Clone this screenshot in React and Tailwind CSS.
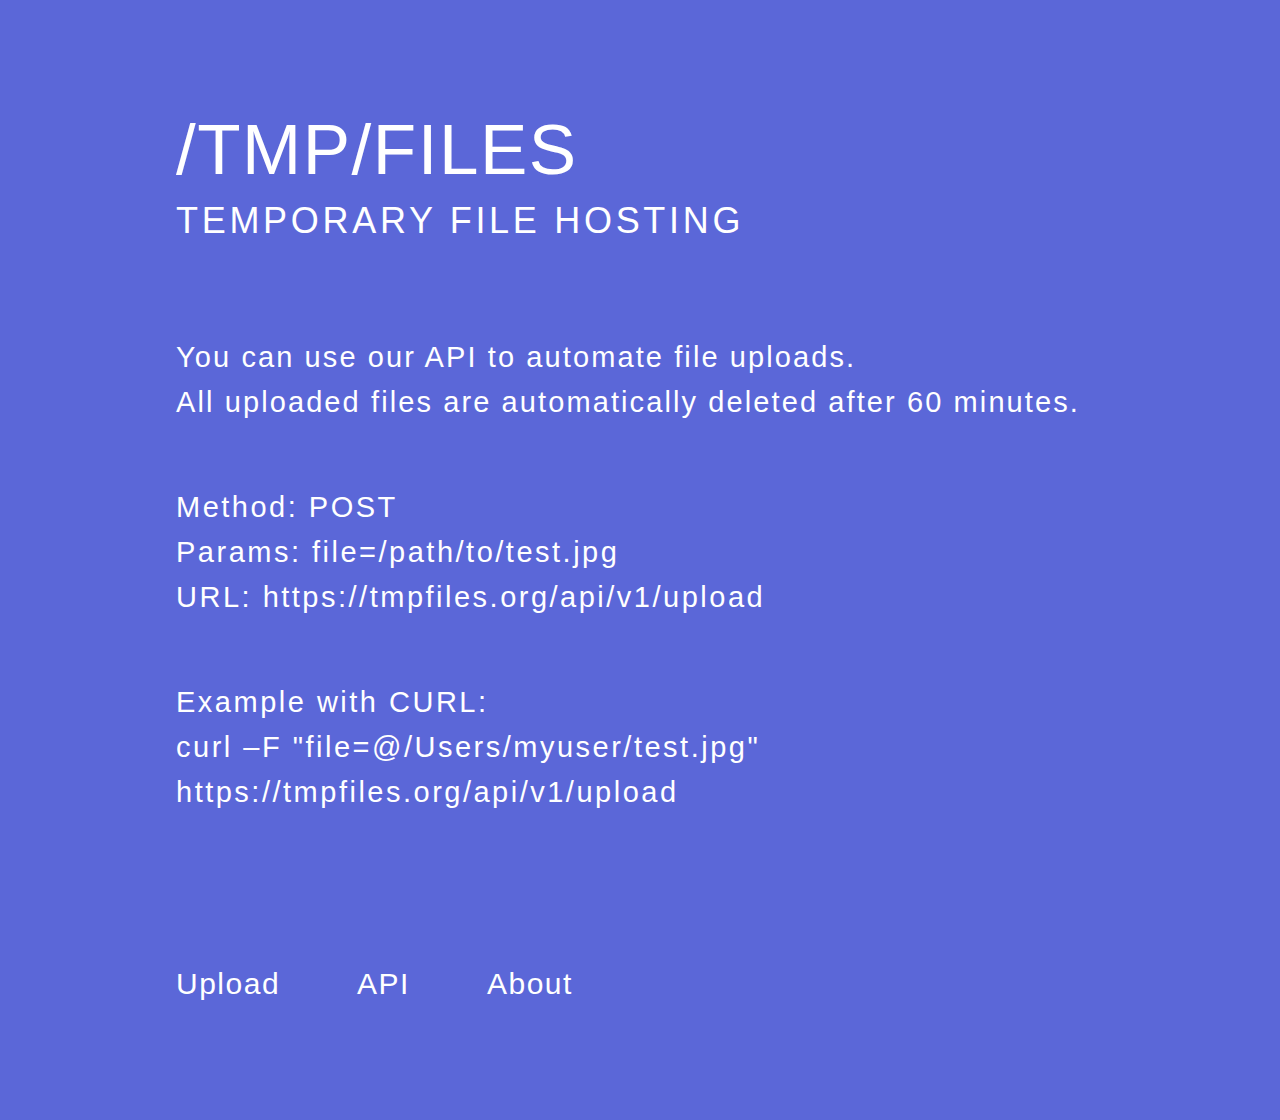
import React from 'react';

const App = () => {
    return (
        <div className="min-h-[1120px] bg-[#5b67d8] text-white font-['Liberation_Sans',Arial,sans-serif]">
            <div className="px-[176px] pt-[114px]">
                {/* Header */}
                <h1 className="text-[71px] leading-[72px] font-normal tracking-[1.5px]">/TMP/FILES</h1>
                <h2 className="mt-[13px] text-[36px] leading-[44px] font-normal tracking-[3.7px]">TEMPORARY FILE HOSTING</h2>

                {/* API info */}
                <div className="mt-[92px] text-[29px] leading-[45px] tracking-[2.1px]">
                    <p>You can use our API to automate file uploads.</p>
                    <p>All uploaded files are automatically deleted after 60 minutes.</p>
                </div>

                <div className="mt-[60px] text-[29px] leading-[45px] tracking-[2.5px]">
                    <p>Method: POST</p>
                    <p>Params: file=/path/to/test.jpg</p>
                    <p>URL: https://tmpfiles.org/api/v1/upload</p>
                </div>

                <div className="mt-[60px] text-[29px] leading-[45px] tracking-[2.5px]">
                    <p>Example with CURL:</p>
                    <p>curl –F "file=@/Users/myuser/test.jpg"</p>
                    <p>https://tmpfiles.org/api/v1/upload</p>
                </div>

                {/* Nav */}
                <nav className="mt-[146px] flex items-center gap-[77px] text-[30px] leading-[45px] tracking-[1.5px]">
                    <a href="#">Upload</a>
                    <a href="#">API</a>
                    <a href="#">About</a>
                </nav>
            </div>
        </div>
    );
};

export default App;
